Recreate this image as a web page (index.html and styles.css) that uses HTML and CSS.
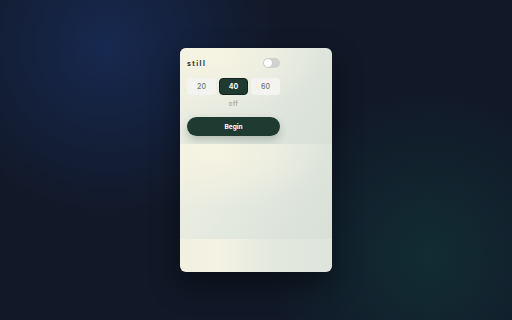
FILE: index.html
```html
<!DOCTYPE html>
<html lang="en">
<head>
  <meta charset="UTF-8">
  <meta name="viewport" content="width=device-width, initial-scale=1.0">
  <title>still</title>
  <link rel="stylesheet" href="styles.css">
</head>
<body>
  <div class="card">
    <section class="panel panel-top">
      <div class="controls">
        <div class="title-row">
          <span class="brand">still</span>
          <button type="button" class="toggle" aria-label="Toggle sound"><span class="knob"></span></button>
        </div>
        <div class="durations">
          <button type="button" class="chip">20</button>
          <button type="button" class="chip active">40</button>
          <button type="button" class="chip">60</button>
        </div>
        <p class="status">off</p>
        <button type="button" class="begin">Begin</button>
      </div>
    </section>
    <section class="panel panel-middle"></section>
    <section class="panel panel-bottom"></section>
  </div>
</body>
</html>
```

FILE: styles.css
```css
/* Base */
:root {
  --green: #1f3a31;
  --chip-bg: #f3f4ef;
  --chip-text: #6f746f;
  --panel:
    radial-gradient(ellipse 70% 60% at 25% 8%, rgba(247, 244, 226, 0.9) 0%, rgba(247, 244, 226, 0) 100%),
    linear-gradient(125deg, #f1f0e2 0%, #e4e9df 45%, #d7dfd7 100%);
}

* {
  margin: 0;
  padding: 0;
  box-sizing: border-box;
}

body {
  font-family: Inter, "Noto Sans", sans-serif;
  min-height: 100vh;
  display: flex;
  align-items: center;
  justify-content: center;
  background-color: #111827;
  background-image:
    radial-gradient(circle at 21% 14%, rgba(25, 45, 90, 0.8) 0%, rgba(25, 45, 90, 0) 36%),
    radial-gradient(circle at 84% 80%, rgba(18, 58, 60, 0.6) 0%, rgba(18, 58, 60, 0) 34%);
}

/* Card */
.card {
  width: 152px;
  height: 224px;
  border-radius: 6px;
  overflow: hidden;
  display: flex;
  flex-direction: column;
  box-shadow: 0 12px 30px rgba(0, 0, 0, 0.45);
}

.panel {
  background: var(--panel);
}

.panel-top {
  height: 96px;
  padding: 10px 7px 0;
}

.panel-middle {
  height: 95px;
}

.panel-bottom {
  flex: 1;
  background: linear-gradient(90deg, #f2f0e1 0%, #f4f2e3 25%, #e3e8df 60%, #dfe5dc 100%);
}

.controls {
  width: 93px;
  display: flex;
  flex-direction: column;
}

.title-row {
  display: flex;
  align-items: center;
  justify-content: space-between;
  height: 10px;
}

.brand {
  font-size: 7px;
  font-weight: 700;
  letter-spacing: 1.4px;
  color: #2a312d;
}

.toggle {
  width: 17px;
  height: 10px;
  border: none;
  border-radius: 5px;
  background: #cfd3ce;
  padding: 1px;
  display: flex;
  align-items: center;
}

.knob {
  width: 8px;
  height: 8px;
  border-radius: 50%;
  background: #ffffff;
  box-shadow: 0 0 1px rgba(0, 0, 0, 0.2);
}

/* Durations */
.durations {
  display: flex;
  gap: 3px;
  margin-top: 10px;
}

.chip {
  flex: 1;
  height: 17px;
  border: 1px solid transparent;
  border-radius: 4px;
  background: var(--chip-bg);
  color: var(--chip-text);
  font-family: inherit;
  font-size: 7px;
  font-weight: 500;
}

.chip.active {
  background: var(--green);
  border-color: #10231c;
  color: #ffffff;
  font-weight: 700;
}

.status {
  margin-top: 5px;
  text-align: center;
  font-size: 6px;
  line-height: 8px;
  color: #858a85;
  letter-spacing: 0.5px;
}

.begin {
  margin-top: 9px;
  height: 19px;
  border: none;
  border-radius: 10px;
  background: var(--green);
  color: #ffffff;
  font-family: inherit;
  font-size: 6.5px;
  font-weight: 700;
  box-shadow: 0 4px 8px rgba(31, 58, 49, 0.25);
}
```
